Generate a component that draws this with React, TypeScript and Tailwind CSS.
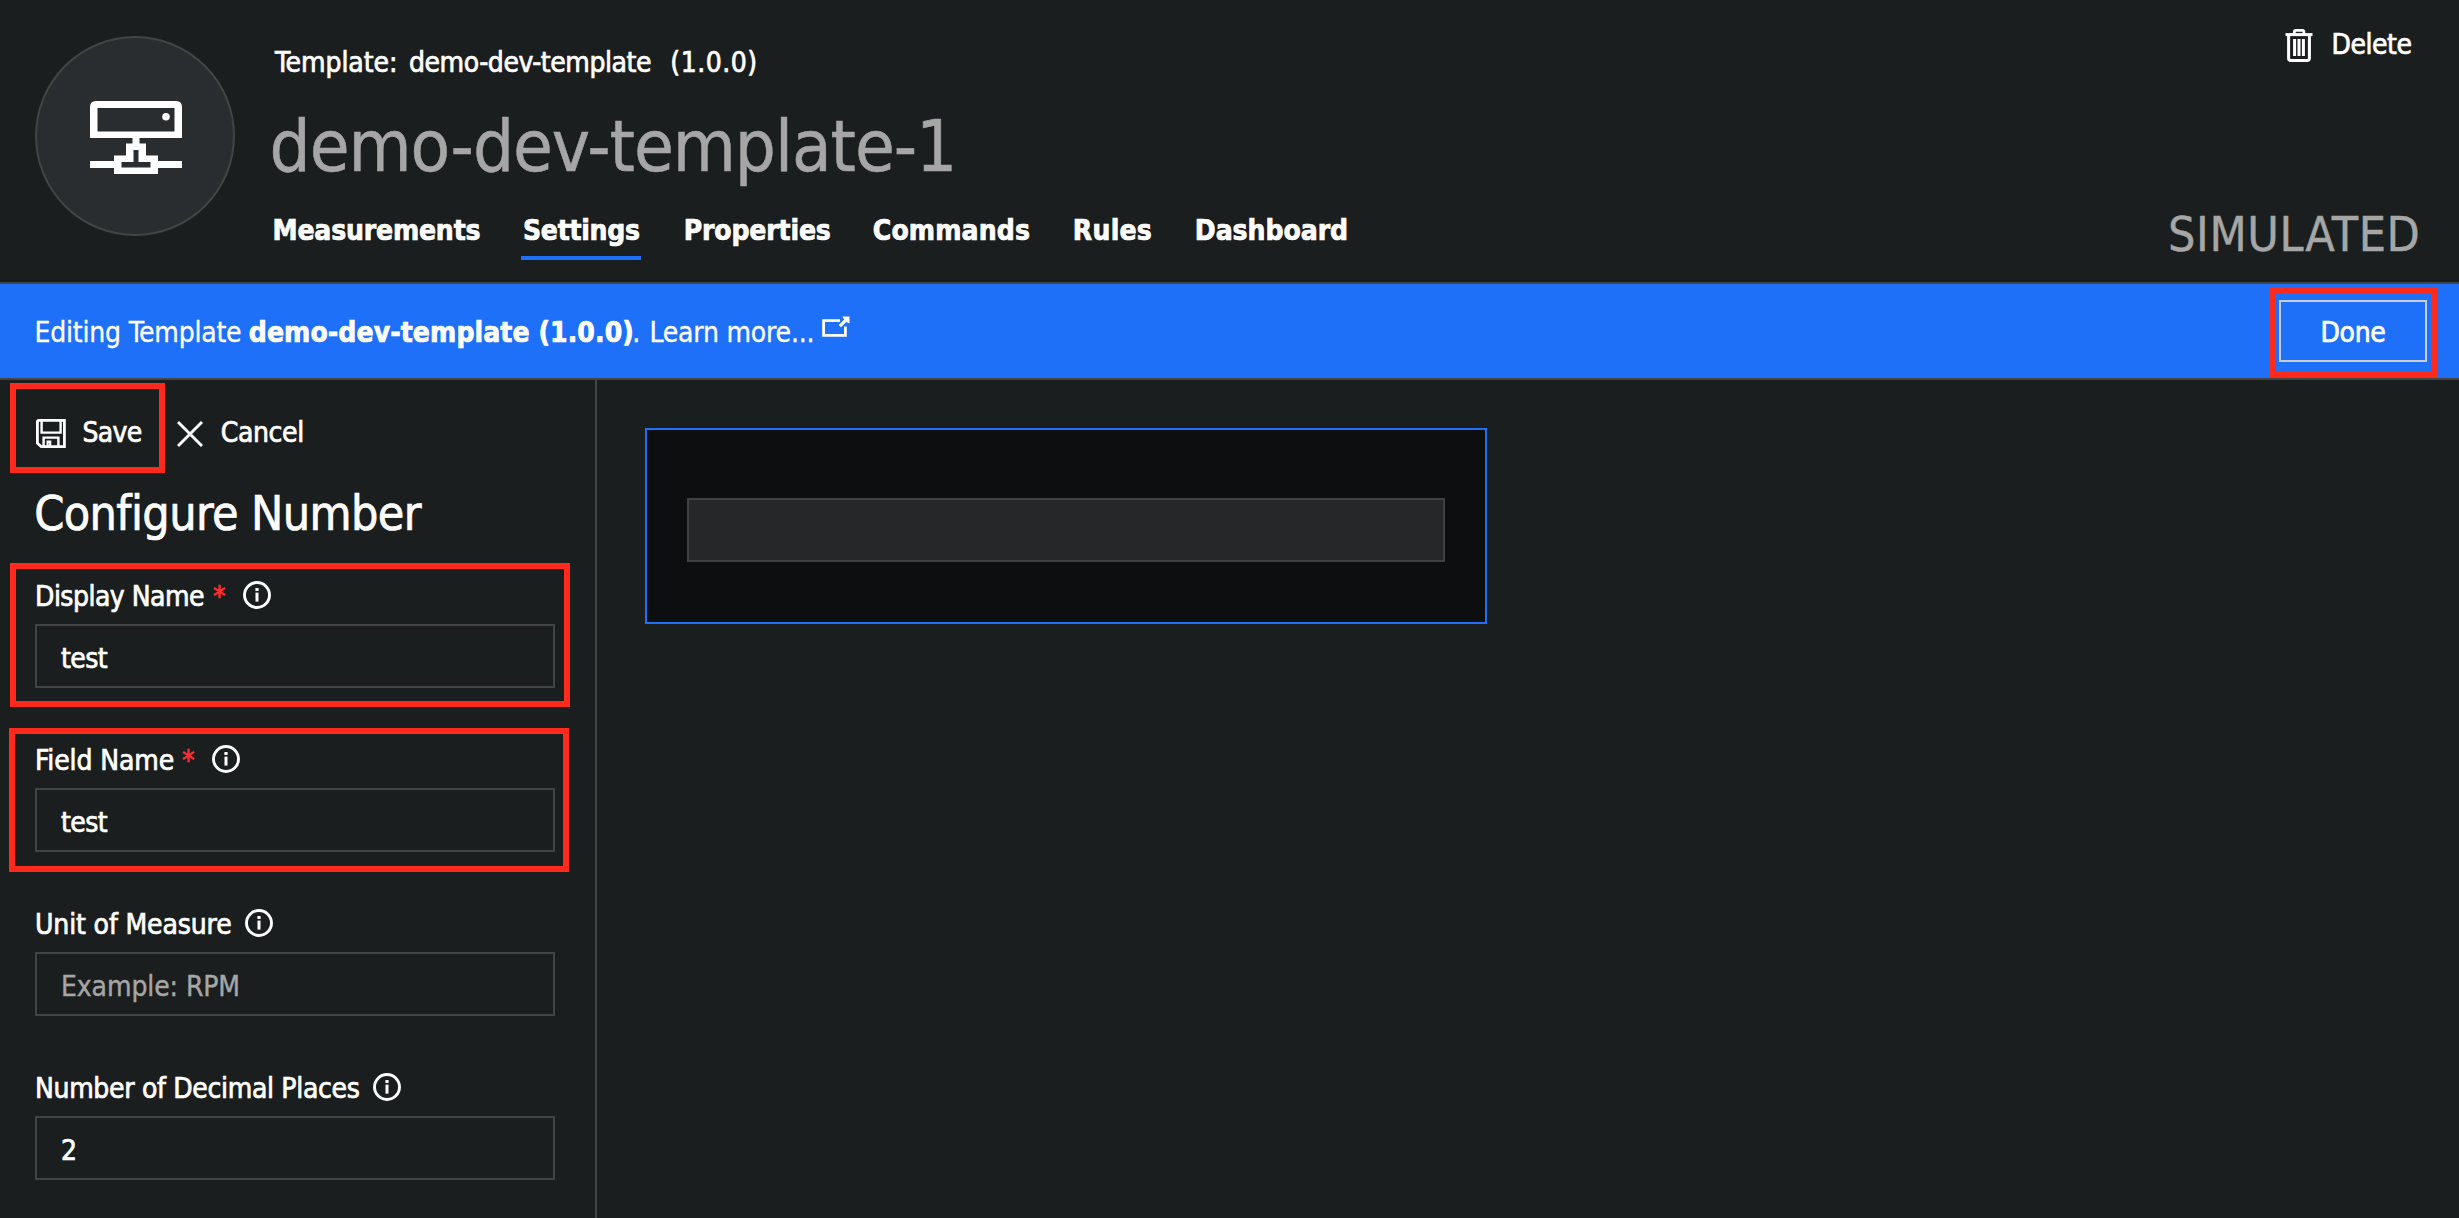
import React from "react";

const DeviceIcon = () => (
  <svg width="92" height="74" viewBox="0 0 92 74" className="block">
    <path
      fill="#fff"
      fillRule="evenodd"
      d="M6 0H86Q92 0 92 6V37H49.5V42.5H56V54.5H68V60H92V67H68V73H24V67H0V60H24V54.5H36V42.5H42.500V37H0V6Q0 0 6 0ZM7.500 7V30.500H84.500V7ZM43.500 49V61H31.500V66.500H60.500V61H48.500V49Z"
    />
    <circle cx="76" cy="15.800" r="3.800" fill="#fff" />
  </svg>
);

const TrashIcon = () => (
  <svg width="28" height="34" viewBox="0 0 28 34" fill="none" stroke="#fff" className="block">
    <path strokeWidth="2.800" d="M9.300 5V3Q9.300 1.400 10.900 1.400H17.300Q18.900 1.400 18.900 3V5" />
    <path strokeWidth="3" d="M0.500 5.600H27.500" />
    <path strokeWidth="3" d="M3.600 6V29.300Q3.600 31.600 5.900 31.600H22.100Q24.400 31.600 24.400 29.300V6" />
    <path strokeWidth="3" d="M9.600 10V27M14 10V27M18.400 10V27" />
  </svg>
);

const SaveIcon = () => (
  <svg width="30" height="30" viewBox="0 0 30 30" fill="none" stroke="#fff" className="block">
    <path strokeWidth="2.800" d="M3 1.400H28.400V27.600H5.200L1.400 24.200V3Q1.400 1.400 3 1.400Z" />
    <path strokeWidth="2.400" d="M5.600 2V13.600H24.600V2" />
    <path strokeWidth="2.400" d="M7.600 27V18.600H22.400V27" />
    <path strokeWidth="2.200" d="M11.600 27V22.600H14.200V27" />
  </svg>
);

const CloseIcon = () => (
  <svg width="26" height="26" viewBox="0 0 26 26" stroke="#fff" strokeWidth="2.900" className="block">
    <path d="M1 1L25 25M25 1L1 25" />
  </svg>
);

const InfoIcon = () => (
  <svg width="28" height="28" viewBox="0 0 28 28" className="block">
    <circle cx="14" cy="14" r="12.500" fill="none" stroke="#fff" strokeWidth="2.900" />
    <rect x="12.400" y="7" width="3.200" height="3" fill="#fff" />
    <rect x="12.500" y="11.600" width="3" height="9" fill="#fff" />
  </svg>
);

const ExternalIcon = () => (
  <svg width="28" height="21" viewBox="0 0 28 21" fill="none" stroke="#fff" className="block">
    <path strokeWidth="2.800" d="M18 4.700H1.600V19.300H23.400V10.500" />
    <path strokeWidth="3.200" d="M17.800 10.200L25 3" />
    <path fill="#fff" stroke="none" d="M20.500 0.500H27.500V7.500L25.300 6.500L21.500 2.500Z" />
  </svg>
);

const Highlight = ({ className }: { className: string }) => (
  <div className={`pointer-events-none absolute border-6 border-[#ff2a1b] ${className}`} />
);

const tabs = [
  { label: "Measurements", box: "w-[208px] pl-[1.5px] tracking-[-0.176px] border-transparent" },
  { label: "Settings", box: "w-[120px] pl-[2px] tracking-[-0.274px] border-[#1f70f8]" },
  { label: "Properties", box: "w-[147px] pl-[0.8px] tracking-[-0.167px] border-transparent" },
  { label: "Commands", box: "w-[158px] pl-[0.8px] tracking-[0.13px] border-transparent" },
  { label: "Rules", box: "w-[80px] pl-[0.8px] tracking-[0.25px] border-transparent" },
  { label: "Dashboard", box: "w-[152px] pl-[0.8px] tracking-[-0.05px] border-transparent" },
];

type FieldProps = {
  label: string;
  labelClass: string;
  iconClass: string;
  value: string;
  valueClass: string;
  required?: boolean;
  highlight?: string;
};

const Field = ({ label, labelClass, iconClass, value, valueClass, required, highlight }: FieldProps) => (
  <div className="relative w-[520px]">
    <div className="flex h-[33px] whitespace-nowrap">
      <span className={labelClass}>{label}</span>
      {required && <span className="ml-[9px] w-[13px] text-[#ff2d32]">*</span>}
      <span className={iconClass}>
        <InfoIcon />
      </span>
    </div>
    <div className="mt-[11px] h-16 border-2 border-[#444] pt-4 pl-6">
      <span className={valueClass}>{value}</span>
    </div>
    {highlight && <Highlight className={highlight} />}
  </div>
);

export default function App() {
  return (
    <div className="flex h-[1218px] w-[2459px] flex-col overflow-hidden bg-[#1a1e1e] font-['DejaVu_Sans_Condensed','DejaVu_Sans',sans-serif] text-[28px] leading-[33px] text-white [-webkit-text-stroke:0.7px]">
      <header className="flex h-[284px] shrink-0 border-b-2 border-[#444]">
        <div className="mt-9 ml-[35px] flex size-[200px] items-center justify-center rounded-full border-2 border-[#444] bg-[#2a2d30]">
          <div className="mt-[3px] ml-[2px]">
            <DeviceIcon />
          </div>
        </div>
        <div className="ml-9 flex flex-col whitespace-nowrap pt-[46px]">
          <div className="flex pl-[4px]">
            <span className="w-[134px] tracking-[-0.06px]">Template:</span>
            <span className="w-[261.3px] tracking-[-0.44px]">demo-dev-template</span>
            <span className="tracking-[0.5px]">(1.0.0)</span>
          </div>
          <h1 className="mt-[25px] -ml-[1.4px] text-[72px] leading-[84px] tracking-[-1.03px] text-[#a6a6a6] [-webkit-text-stroke:0.5px]">
            demo-dev-template-1
          </h1>
          <nav className="mt-[26px] flex gap-[42px] font-bold">
            {tabs.map((t) => (
              <a key={t.label} className={`border-b-4 pb-[9px] ${t.box}`}>
                {t.label}
              </a>
            ))}
          </nav>
        </div>
        <div className="mr-[39px] ml-auto flex flex-col items-end whitespace-nowrap">
          <div className="mt-7 mr-[9px] flex">
            <span className="mt-[0.5px]">
              <TrashIcon />
            </span>
            <span className="ml-[18.5px] w-[79.500px] tracking-[-0.456px]">Delete</span>
          </div>
          <div className="mt-[143.500px] w-[252px] text-5xl leading-[56px] tracking-[0.62px] text-[#a6a6a6] [-webkit-text-stroke:0.4px]">
            SIMULATED
          </div>
        </div>
      </header>

      <div className="flex h-24 shrink-0 border-b-2 border-[#444] bg-[#1f70f8] pl-[34.600px] whitespace-nowrap">
        <div className="flex pt-8">
          <span className="w-[214.2px] tracking-[-0.214px] [-webkit-text-stroke:0.3px]">Editing Template</span>
          <span className="w-[383.500px] font-bold tracking-[0.09px]">demo-dev-template (1.0.0)</span>
          <span className="w-[17.200px] [-webkit-text-stroke:0.3px]">.</span>
          <span className="w-[172.500px] tracking-[-0.207px] [-webkit-text-stroke:0.3px]">Learn more...</span>
          <ExternalIcon />
        </div>
        <div className="relative mt-4 mr-8 ml-auto h-[62px] w-[148px] border-2 border-[#ccc] pt-[14px] text-center tracking-[-0.26px]">
          Done
          <Highlight className="-top-[14px] -left-3 h-[89px] w-[168px]" />
        </div>
      </div>

      <div className="flex min-h-0 flex-1">
        <aside className="relative w-[597px] shrink-0 border-r-2 border-[#444] pl-[35px]">
          <div className="flex h-[69px] pt-9 whitespace-nowrap">
            <span className="mt-[3px] ml-px">
              <SaveIcon />
            </span>
            <span className="ml-[16.400px] w-[94.200px] tracking-[-0.678px]">Save</span>
            <span className="mt-[4.500px]">
              <CloseIcon />
            </span>
            <span className="ml-[18.2px] tracking-[-0.391px]">Cancel</span>
          </div>
          <Highlight className="top-[3px] left-[10px] h-[90px] w-[155px]" />
          <h2 className="mt-9 -ml-[0.8px] text-5xl leading-[56px] tracking-[-0.605px]">Configure Number</h2>
          <div className="mt-[39px] flex flex-col gap-14">
            <Field
              label="Display Name"
              labelClass="w-[169px] tracking-[-0.516px]"
              iconClass="ml-[17px] mt-px"
              value="test"
              valueClass="tracking-[-0.567px]"
              required
              highlight="-top-[17px] -left-[25px] h-[144px] w-[560px]"
            />
            <Field
              label="Field Name"
              labelClass="w-[138px] tracking-[-0.119px]"
              iconClass="ml-[17px] mt-px"
              value="test"
              valueClass="tracking-[-0.567px]"
              required
              highlight="-top-4 -left-[26px] h-[144px] w-[560px]"
            />
            <Field
              label="Unit of Measure"
              labelClass="w-[210px] tracking-[-0.132px]"
              iconClass="mt-px"
              value="Example: RPM"
              valueClass="tracking-[-0.1px] text-[#a6a6a6] [-webkit-text-stroke:0.4px]"
            />
            <Field
              label="Number of Decimal Places"
              labelClass="w-[338px] tracking-[-0.325px]"
              iconClass="mt-px"
              value="2"
              valueClass=""
            />
          </div>
        </aside>
        <main className="pt-12 pl-12">
          <div className="h-[196px] w-[842px] border-2 border-[#1f70f8] bg-[#0d0e10] px-10 pt-[68px]">
            <div className="h-16 border-2 border-[#404143] bg-[#262729]" />
          </div>
        </main>
      </div>
    </div>
  );
}
